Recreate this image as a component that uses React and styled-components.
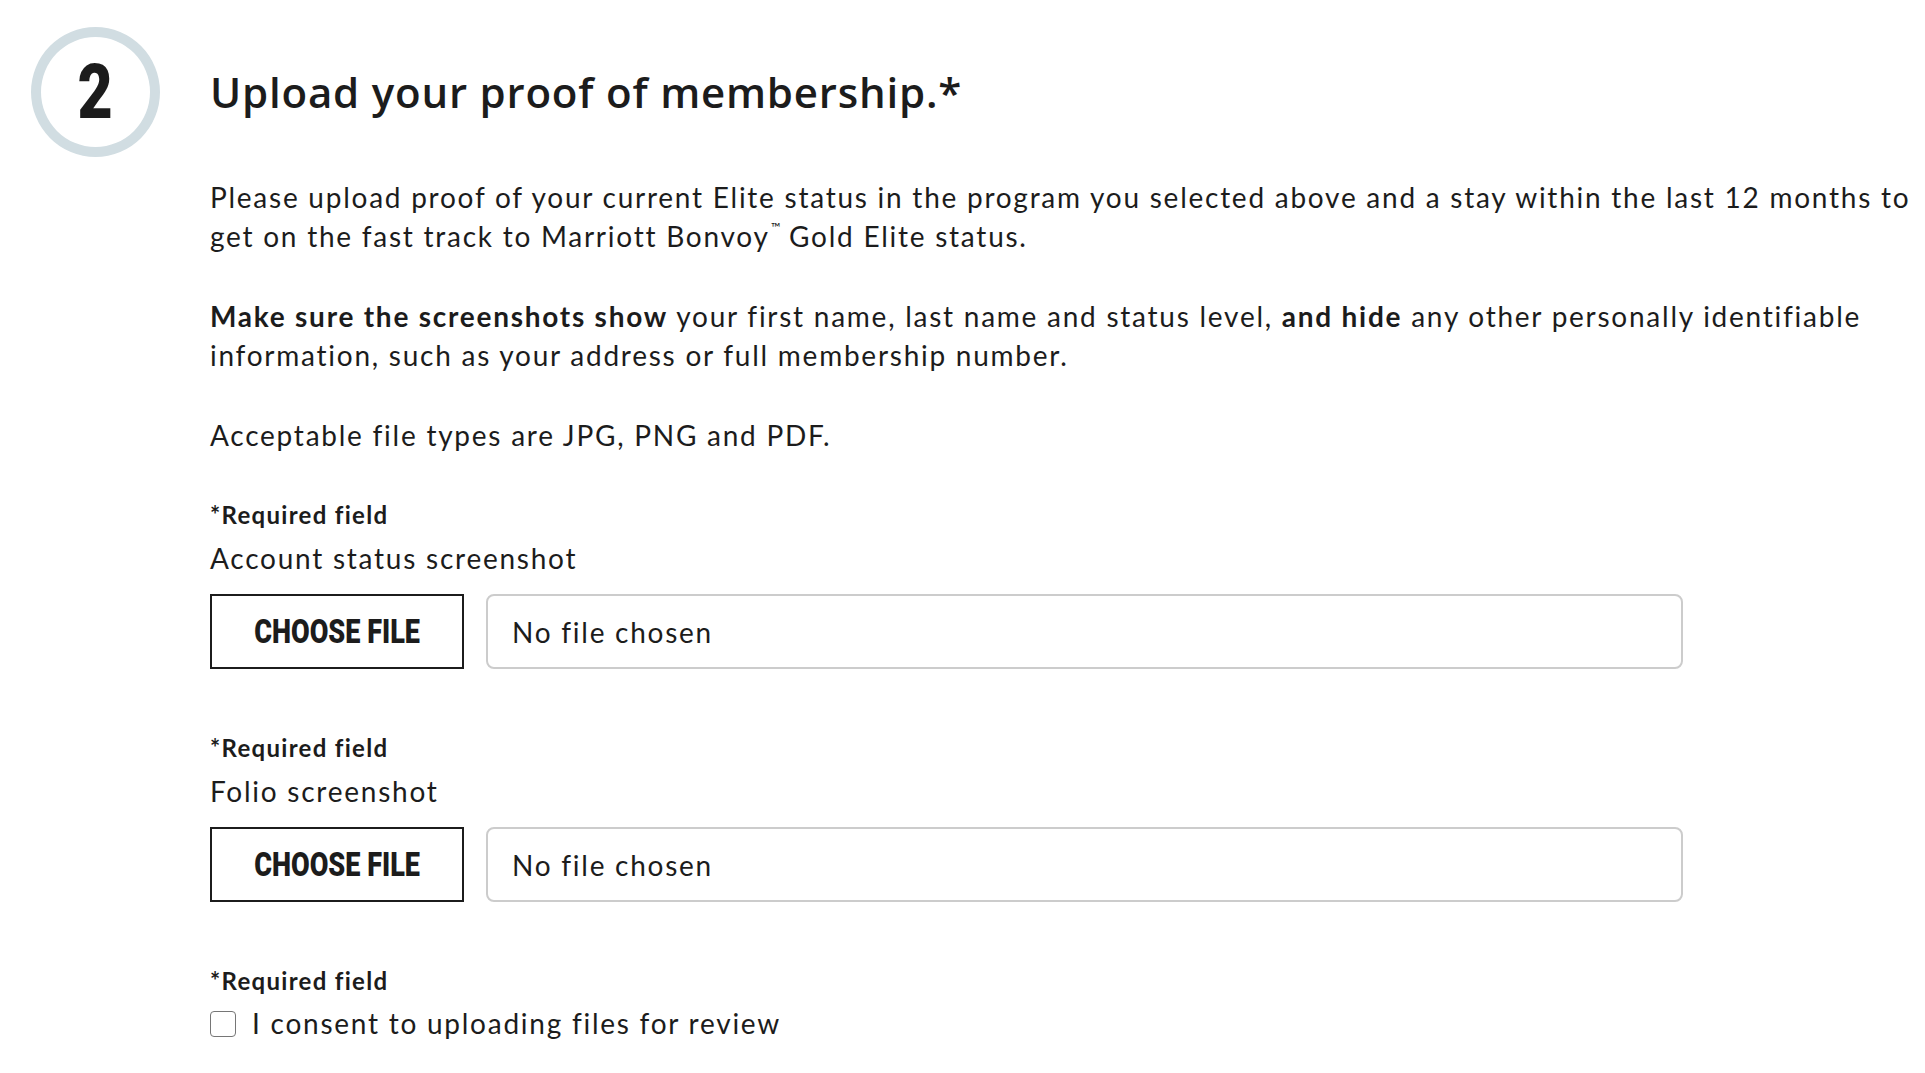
import React from "react";
import styled, { createGlobalStyle } from "styled-components";

const GlobalStyle = createGlobalStyle`
  html, body {
    margin: 0;
    padding: 0;
    background: #ffffff;
  }
  body {
    font-family: Lato, "Open Sans", Arial, sans-serif;
    color: #1c1c1c;
  }
`;

const Section = styled.section`
  display: grid;
  grid-template-columns: 129px 1fr;
  grid-template-rows: 130px auto;
  column-gap: 50px;
  row-gap: 21px;
  padding: 27px 4px 40px 31px;
  box-sizing: border-box;
  width: 100%;
`;

const StepCircle = styled.div`
  width: 129px;
  height: 130px;
  box-sizing: border-box;
  border: 10px solid #d1dde2;
  border-radius: 50%;
  display: flex;
  align-items: center;
  justify-content: center;
`;

const Condensed = styled.span`
  display: inline-block;
  font-family: Roboto, "Liberation Sans", sans-serif;
  font-weight: 900;
  font-size: ${(p) => p.$size}px;
  line-height: 1;
  color: #1c1c1c;
  transform: scaleX(${(p) => p.$squeeze});
`;

const Heading = styled.h2`
  margin: 0;
  align-self: center;
  font-family: "Open Sans", Lato, sans-serif;
  font-weight: 600;
  font-size: 42px;
  letter-spacing: 0.8px;
  line-height: 1.2;
  color: #1c1c1c;
`;

const Body = styled.div`
  grid-column: 2;
  display: flex;
  flex-direction: column;
  letter-spacing: 1.75px;
`;

const Paragraph = styled.p`
  margin: 0 0 ${(p) => (p.$gap ? p.$gap : 41)}px;
  font-size: 28px;
  line-height: 39px;
  color: #1c1c1c;
`;

const Strong = styled.strong`
  font-weight: 700;
`;

const Tm = styled.sup`
  font-size: 0.45em;
  letter-spacing: 0;
  vertical-align: 1.2em;
  line-height: 0;
  margin-left: 1px;
`;

const Field = styled.div`
  display: flex;
  flex-direction: column;
  margin-bottom: ${(p) => (p.$last ? "0" : "62px")};
`;

const Required = styled.div`
  font-size: 24px;
  line-height: 32px;
  font-weight: 700;
  letter-spacing: 1.3px;
  color: #1c1c1c;
  margin-top: 1px;
  margin-bottom: ${(p) => (p.$tight ? 7 : 8)}px;
`;

const Label = styled.label`
  font-size: 28px;
  line-height: 39px;
  color: #1c1c1c;
  margin-bottom: 16px;
`;

const FileRow = styled.div`
  display: flex;
  gap: 22px;
  align-items: stretch;
`;

const ChooseButton = styled.button`
  width: 254px;
  height: 75px;
  box-sizing: border-box;
  border: 2px solid #1c1c1c;
  background: #ffffff;
  border-radius: 0;
  display: flex;
  align-items: center;
  justify-content: center;
  cursor: pointer;
  padding: 0;
  letter-spacing: 0;
`;

const FileName = styled.div`
  width: 1197px;
  height: 75px;
  box-sizing: border-box;
  border: 2px solid #cccccc;
  border-radius: 8px;
  display: flex;
  align-items: center;
  padding-left: 24px;
  font-size: 28px;
  color: #1c1c1c;
`;

const CheckRow = styled.label`
  display: flex;
  align-items: center;
  gap: 16px;
  font-size: 28px;
  line-height: 39px;
  color: #1c1c1c;
`;

const Box = styled.span`
  width: 26px;
  height: 26px;
  box-sizing: border-box;
  border: 1.5px solid #767676;
  border-radius: 4px;
  background: #ffffff;
  flex: none;
`;

function FileField({ label }) {
  return (
    <Field>
      <Required>*Required field</Required>
      <Label>{label}</Label>
      <FileRow>
        <ChooseButton type="button">
          <Condensed $size={33} $squeeze={0.82}>CHOOSE FILE</Condensed>
        </ChooseButton>
        <FileName>No file chosen</FileName>
      </FileRow>
    </Field>
  );
}

export default function App() {
  return (
    <>
      <GlobalStyle />
      <Section>
        <StepCircle>
          <Condensed $size={76} $squeeze={0.8}>2</Condensed>
        </StepCircle>
        <Heading>Upload your proof of membership.*</Heading>
        <Body>
          <Paragraph>
            Please upload proof of your current Elite status in the program you selected above and a stay within the last 12 months to get on the fast track to Marriott Bonvoy<Tm>™</Tm> Gold Elite status.
          </Paragraph>
          <Paragraph>
            <Strong>Make sure the screenshots show</Strong> your first name, last name and status level, <Strong>and hide</Strong> any other personally identifiable information, such as your address or full membership number.
          </Paragraph>
          <Paragraph $gap={43}>Acceptable file types are JPG, PNG and PDF.</Paragraph>
          <FileField label="Account status screenshot" />
          <FileField label="Folio screenshot" />
          <Field $last>
            <Required $tight>*Required field</Required>
            <CheckRow>
              <Box />
              I consent to uploading files for review
            </CheckRow>
          </Field>
        </Body>
      </Section>
    </>
  );
}
